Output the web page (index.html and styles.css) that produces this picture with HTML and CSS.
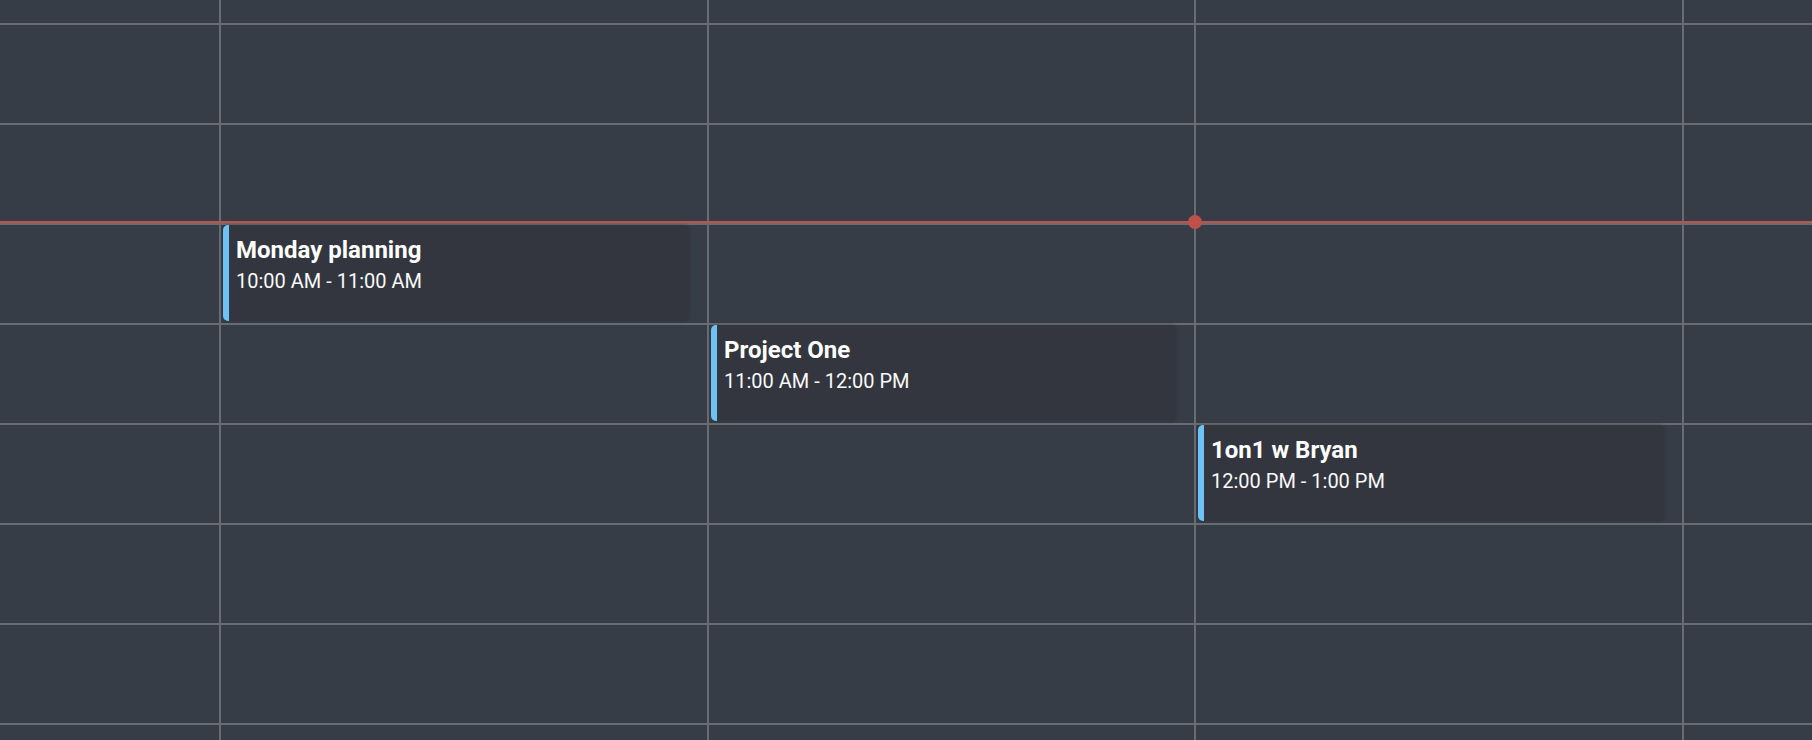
FILE: index.html
```html
<!DOCTYPE html>
<html lang="en">
<head>
  <meta charset="UTF-8" />
  <meta name="viewport" content="width=device-width, initial-scale=1.0" />
  <title>Week View</title>
  <link rel="stylesheet" href="styles.css">
</head>
<body>
  <div class="calendar">
    <div class="week">
      <div class="day">
        <div class="slot slot-top"></div>
        <div class="slot"></div>
        <div class="slot"></div>
        <div class="slot"></div>
        <div class="slot"></div>
        <div class="slot"></div>
        <div class="slot"></div>
        <div class="slot"></div>
        <div class="slot slot-end"></div>
      </div>
      <div class="day">
        <div class="slot slot-top"></div>
        <div class="slot"></div>
        <div class="slot"></div>
        <div class="slot">
          <div class="event">
            <div class="event-title">Monday planning</div>
            <div class="event-time">10:00 AM - 11:00 AM</div>
          </div>
        </div>
        <div class="slot"></div>
        <div class="slot"></div>
        <div class="slot"></div>
        <div class="slot"></div>
        <div class="slot slot-end"></div>
      </div>
      <div class="day">
        <div class="slot slot-top"></div>
        <div class="slot"></div>
        <div class="slot"></div>
        <div class="slot"></div>
        <div class="slot">
          <div class="event">
            <div class="event-title">Project One</div>
            <div class="event-time">11:00 AM - 12:00 PM</div>
          </div>
        </div>
        <div class="slot"></div>
        <div class="slot"></div>
        <div class="slot"></div>
        <div class="slot slot-end"></div>
      </div>
      <div class="day">
        <div class="slot slot-top"></div>
        <div class="slot"></div>
        <div class="slot"></div>
        <div class="slot"></div>
        <div class="slot"></div>
        <div class="slot">
          <div class="event">
            <div class="event-title">1on1 w Bryan</div>
            <div class="event-time">12:00 PM - 1:00 PM</div>
          </div>
        </div>
        <div class="slot"></div>
        <div class="slot"></div>
        <div class="slot slot-end"></div>
      </div>
      <div class="day day-last">
        <div class="slot slot-top"></div>
        <div class="slot"></div>
        <div class="slot"></div>
        <div class="slot"></div>
        <div class="slot"></div>
        <div class="slot"></div>
        <div class="slot"></div>
        <div class="slot"></div>
        <div class="slot slot-end"></div>
      </div>
    </div>

    <!-- current time marker -->
    <div class="now-line">
      <span class="now-dot"></span>
    </div>
  </div>
</body>
</html>
```

FILE: styles.css
```css
body {
  margin: 0;
  background: #373d46;
  font-family: 'Roboto', 'Liberation Sans', sans-serif;
  color: #fff;
  overflow: hidden;
}

.calendar {
  position: relative;
  width: 1812px;
  height: 740px;
  overflow: hidden;
}

.week {
  display: flex;
  height: 100%;
}

.day {
  display: flex;
  flex-direction: column;
  border-right: 2px solid #696c72;
}

.day:nth-child(1) { width: 219px; }
.day:nth-child(2) { width: 486px; }
.day:nth-child(3) { width: 485px; }
.day:nth-child(4) { width: 486px; }

.day-last {
  flex: 1;
  border-right: none;
}

.slot {
  height: 98px;
  flex-shrink: 0;
  border-bottom: 2px solid #696c72;
  padding: 0 18px 0 2px;
}

.slot-top {
  height: 23px;
  padding: 0;
}

.slot-end {
  flex: 1;
  border-bottom: none;
  padding: 0;
}

.event {
  height: 96px;
  box-sizing: border-box;
  background: #33363e;
  border-left: 6px solid #6cc3f4;
  border-radius: 5px;
  padding: 11px 8px 0 7px;
  box-shadow: 0 0 3px rgba(40, 44, 50, 0.5);
}

.event-title {
  font-size: 24px;
  font-weight: bold;
  line-height: 29px;
}

.event-time {
  font-size: 20px;
  line-height: 24px;
  margin-top: 4px;
  color: #fafafa;
}

.now-line {
  position: absolute;
  left: 0;
  right: 0;
  top: 221px;
  height: 2px;
  background: #c0514a;
}

.now-dot {
  position: absolute;
  left: 1188px;
  top: -6px;
  width: 14px;
  height: 14px;
  border-radius: 50%;
  background: #c0514a;
}
```
